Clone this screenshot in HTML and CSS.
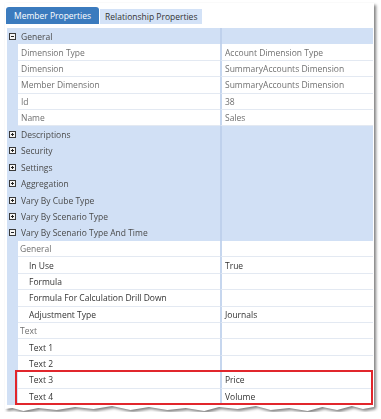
FILE: index.html
```html
<!DOCTYPE html>
<html lang="en">
    <head>
        <meta charset="utf-8" />
        <link rel="stylesheet" href="styles.css">
    </head>
    <body>
        <div class="wrap">
            <div class="panel">
                <div class="tabs">
                    <span class="tab active">Member Properties</span>
                    <span class="tab">Relationship Properties</span>
                </div>
                <div class="grid">
                    <div class="row cat"><div class="name"><i class="exp minus"></i>General</div><div class="val"></div></div>
                    <div class="row"><div class="ind"></div><div class="name ro">Dimension Type</div><div class="val ro">Account Dimension Type</div></div>
                    <div class="row"><div class="ind"></div><div class="name ro">Dimension</div><div class="val ro">SummaryAccounts Dimension</div></div>
                    <div class="row"><div class="ind"></div><div class="name ro">Member Dimension</div><div class="val ro">SummaryAccounts Dimension</div></div>
                    <div class="row"><div class="ind"></div><div class="name ro">Id</div><div class="val ro">38</div></div>
                    <div class="row"><div class="ind"></div><div class="name ro">Name</div><div class="val ro">Sales</div></div>
                    <div class="row cat"><div class="name"><i class="exp plus"></i>Descriptions</div><div class="val"></div></div>
                    <div class="row cat"><div class="name"><i class="exp plus"></i>Security</div><div class="val"></div></div>
                    <div class="row cat"><div class="name"><i class="exp plus"></i>Settings</div><div class="val"></div></div>
                    <div class="row cat"><div class="name"><i class="exp plus"></i>Aggregation</div><div class="val"></div></div>
                    <div class="row cat"><div class="name"><i class="exp plus"></i>Vary By Cube Type</div><div class="val"></div></div>
                    <div class="row cat"><div class="name"><i class="exp plus"></i>Vary By Scenario Type</div><div class="val"></div></div>
                    <div class="row cat"><div class="name"><i class="exp minus"></i>Vary By Scenario Type And Time</div><div class="val"></div></div>
                    <div class="row"><div class="ind"></div><div class="name ro sub">General</div><div class="val"></div></div>
                    <div class="row"><div class="ind"></div><div class="name lvl2">In Use</div><div class="val">True</div></div>
                    <div class="row"><div class="ind"></div><div class="name lvl2">Formula</div><div class="val"></div></div>
                    <div class="row"><div class="ind"></div><div class="name lvl2">Formula For Calculation Drill Down</div><div class="val"></div></div>
                    <div class="row"><div class="ind"></div><div class="name lvl2">Adjustment Type</div><div class="val">Journals</div></div>
                    <div class="row"><div class="ind"></div><div class="name ro sub">Text</div><div class="val"></div></div>
                    <div class="row"><div class="ind"></div><div class="name lvl2">Text 1</div><div class="val"></div></div>
                    <div class="row"><div class="ind"></div><div class="name lvl2">Text 2</div><div class="val"></div></div>
                    <div class="highlight">
                        <div class="row"><div class="ind"></div><div class="name lvl2">Text 3</div><div class="val">Price</div></div>
                        <div class="row"><div class="ind"></div><div class="name lvl2">Text 4</div><div class="val">Volume</div></div>
                    </div>
                </div>
            </div>
        </div>
    </body>
</html>
```

FILE: styles.css
```css
/* page */
body {
    margin:             0;
    background-color:   #FFFFFF;
    font-family:        "Open Sans", "Noto Sans", sans-serif;
    font-size:          8.5px;
    color:              #333333;
}
.wrap {
    margin:             3px 0 0 5px;
    width:              369px;
    filter:             drop-shadow(2px 2px 1.5px rgba(0, 0, 0, .5));
}
.panel {
    background-color:   #FFFFFF;
    height:             409px;
    padding:            4px 0 0 1px;
    box-sizing:         border-box;
    clip-path:          polygon(0 0, 100% 0, 100% calc(100% - 5px), 97% calc(100% - 3px), 94% calc(100% - 6px),
                                90% calc(100% - 2px), 86% calc(100% - 5px), 82% calc(100% - 1px), 77% calc(100% - 4px),
                                72% calc(100% - 2px), 68% calc(100% - 6px), 63% calc(100% - 3px), 58% calc(100% - 5px),
                                54% calc(100% - 1px), 49% calc(100% - 4px), 44% calc(100% - 2px), 39% calc(100% - 5px),
                                34% calc(100% - 2px), 29% calc(100% - 6px), 24% calc(100% - 3px), 19% calc(100% - 5px),
                                14% calc(100% - 2px), 9% calc(100% - 4px), 5% calc(100% - 1px), 2% calc(100% - 4px), 0 calc(100% - 3px));
}

/* tabs */
.tabs {
    display:            flex;
    align-items:        flex-end;
    height:             17px;
}
.tab {
    display:            flex;
    align-items:        center;
    height:             15px;
    padding:            0 5px;
    margin-right:       1px;
    background-color:   #D3E2F7;
    color:              #333333;
}
.tab.active {
    height:             17px;
    padding:            0 8px;
    background-color:   #3B7BBE;
    color:              #FFFFFF;
    border-radius:      3px 3px 0 0;
}

/* property grid */
.grid {
    margin:             4px 0 0 1px;
    width:              366px;
}
.row {
    display:            grid;
    grid-template-columns: 11px 202px 1fr;
    height:             16.4px;
}
.row > div {
    display:            flex;
    align-items:        center;
    white-space:        nowrap;
    overflow:           hidden;
}
.ind {
    background-color:   #D1E0F5;
}
.name {
    padding-left:       3px;
    border-bottom:      1px solid #E3E9F2;
}
.val {
    padding-left:       3px;
    border-left:        2px solid #C6D6EE;
    border-bottom:      1px solid #E3E9F2;
}
.ro {
    color:              #707070;
}
.sub {
    padding-left:       2px;
}
.lvl2 {
    padding-left:       11px;
}
.row.cat {
    background-color:   #D1E0F5;
}
.row.cat .name {
    grid-column:        1 / 3;
    padding-left:       2px;
    color:              #4A4A4A;
    border-bottom:      none;
}
.row.cat .val {
    border-bottom:      none;
    border-left-color:  #BFD1EC;
}

/* expander box */
.exp {
    position:           relative;
    width:              5px;
    height:             5px;
    border:             1px solid #3A3A3A;
    margin-right:       5px;
    background-color:   #F4F4F4;
}
.exp::before {
    content:            "";
    position:           absolute;
    left:               1px;
    top:                2px;
    width:              3px;
    height:             1px;
    background-color:   #222222;
}
.exp.plus::after {
    content:            "";
    position:           absolute;
    left:               2px;
    top:                1px;
    width:              1px;
    height:             3px;
    background-color:   #222222;
}

/* red call-out box */
.highlight {
    position:           relative;
}
.highlight::after {
    content:            "";
    position:           absolute;
    top:                -2.5px;
    left:               8px;
    right:              0;
    bottom:             -0.5px;
    border:             2.5px solid #E1262C;
}
```
